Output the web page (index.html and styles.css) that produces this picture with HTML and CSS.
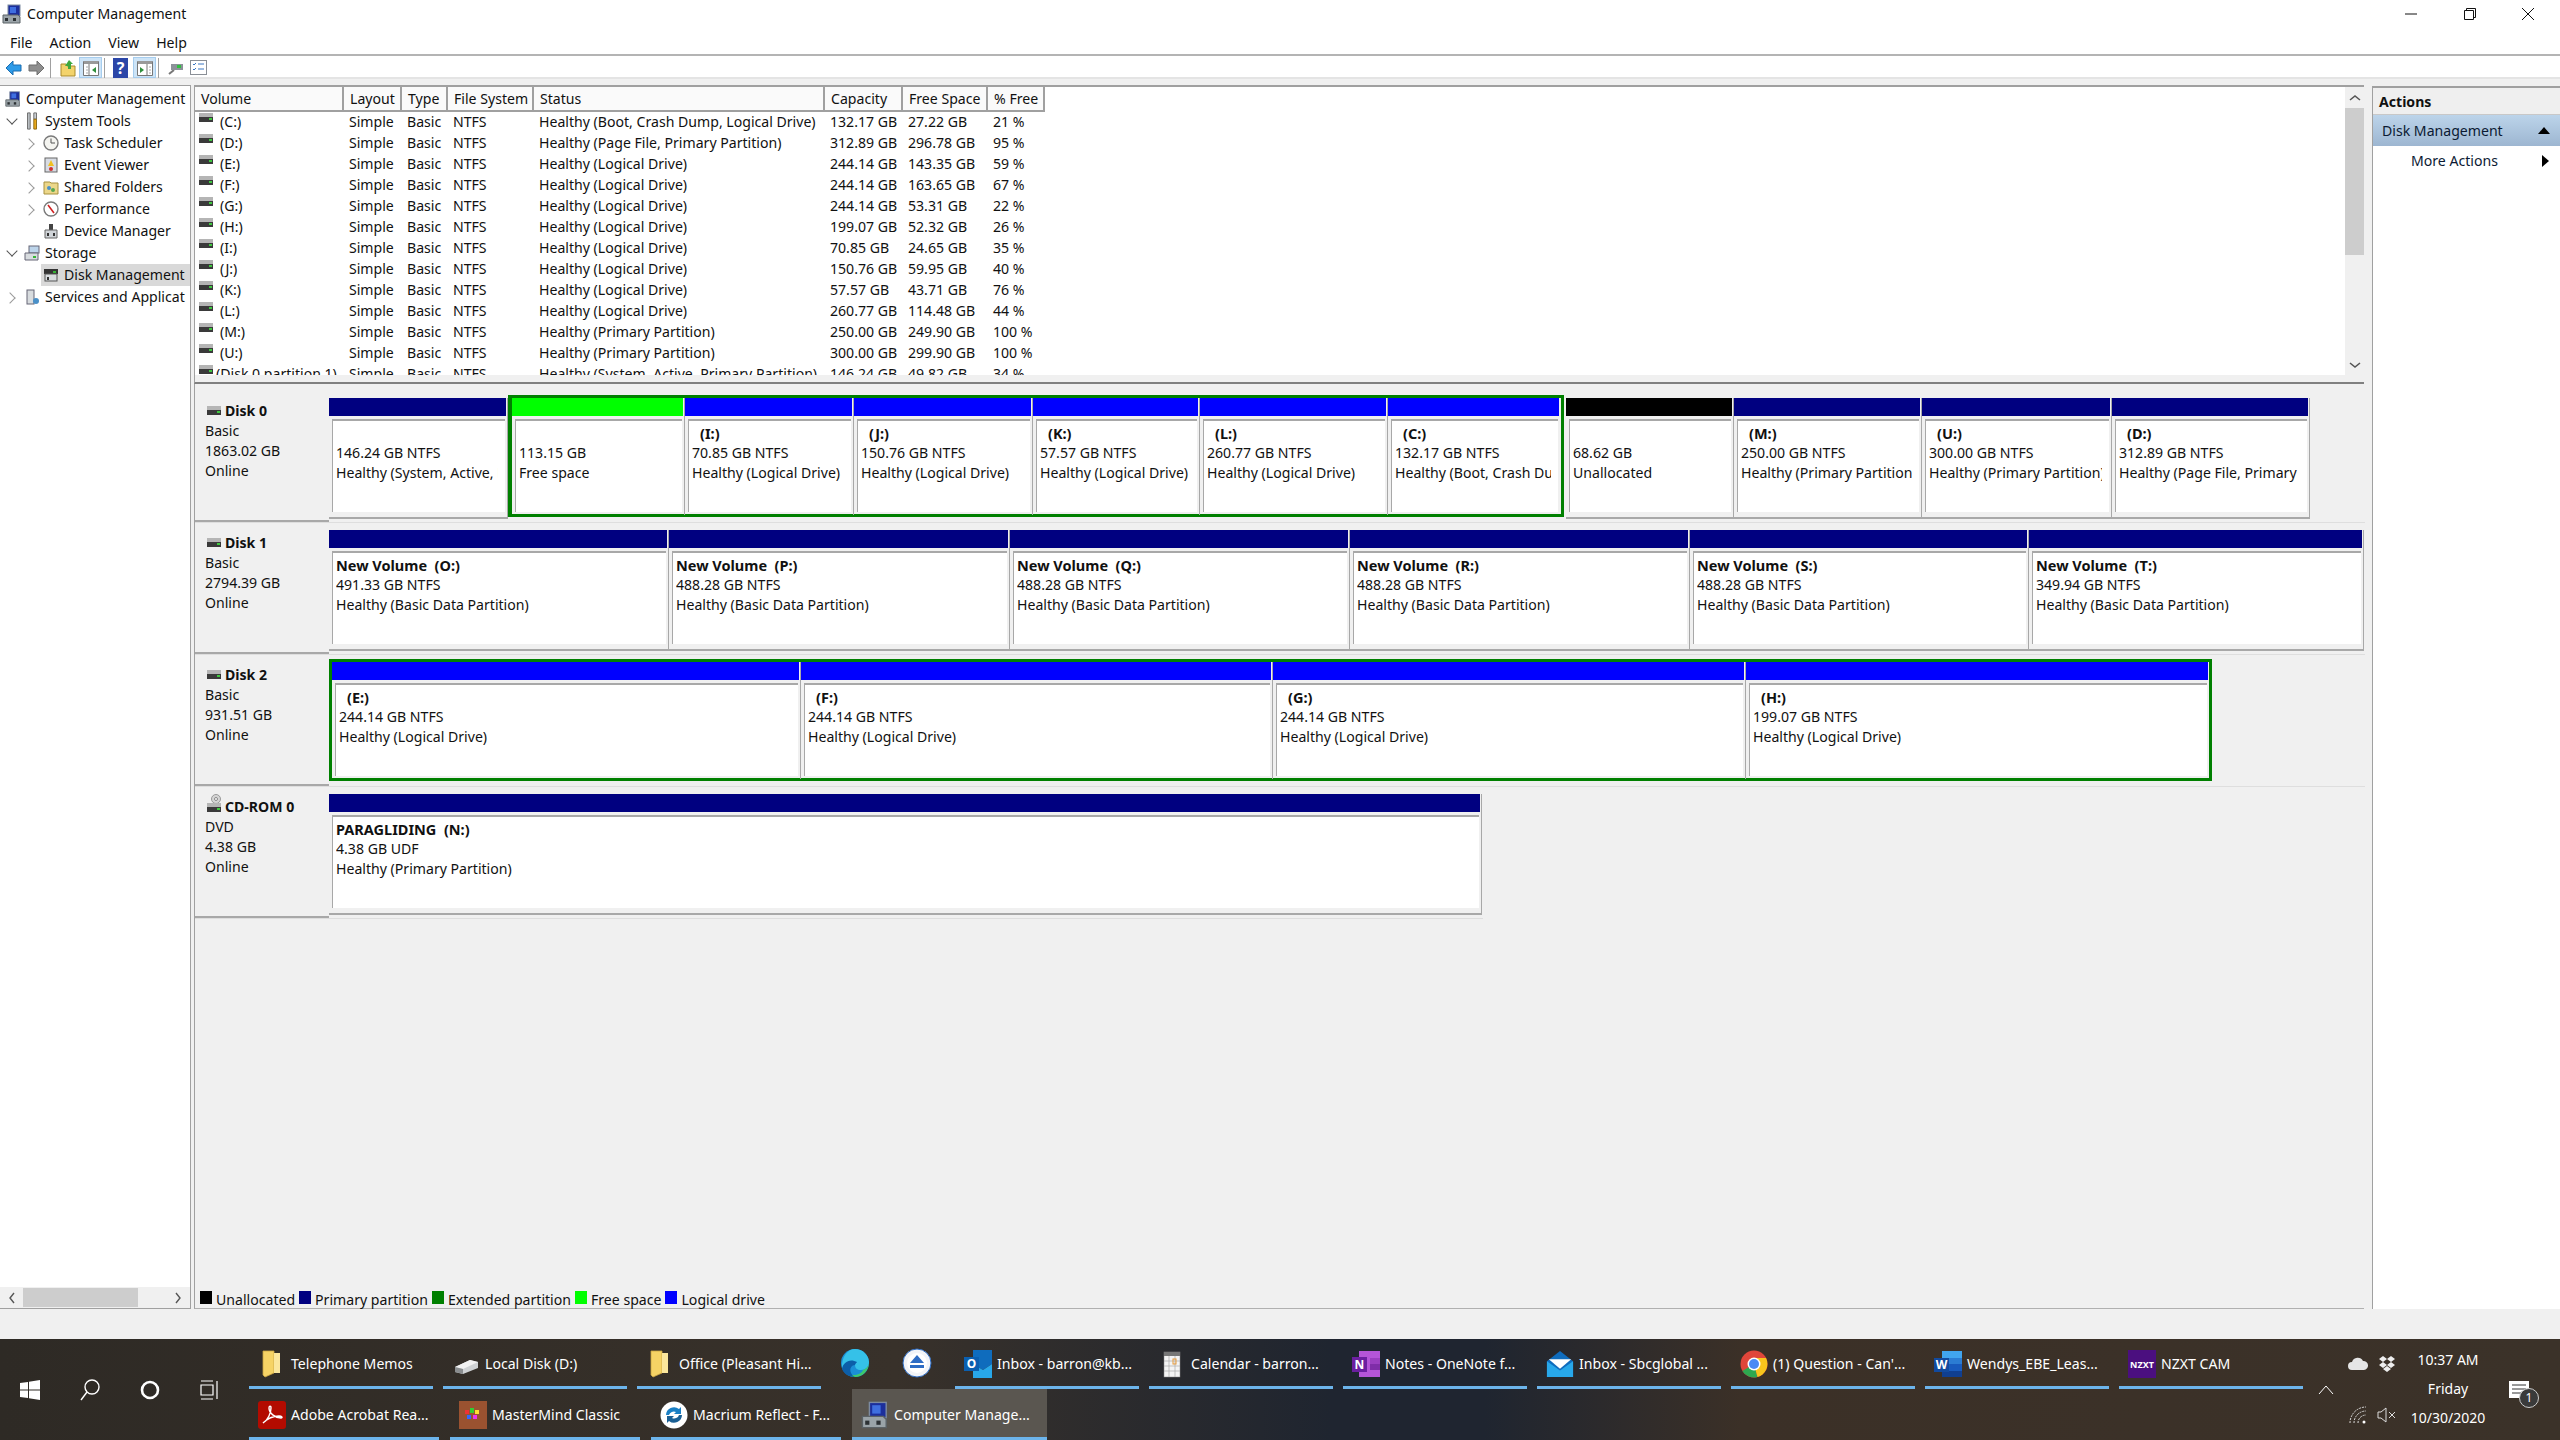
FILE: index.html
```html
<!DOCTYPE html>
<html lang="en">
<head>
<meta charset="utf-8">
<title>Computer Management</title>
<link rel="stylesheet" href="styles.css">
</head>
<body>
<svg class="defs" width="0" height="0">
  <symbol id="drive" viewBox="0 0 14 10"><rect x="0" y="0" width="14" height="4" fill="#b5b5b5"/><rect x="0" y="4" width="14" height="5" fill="#3a3a3a"/><rect x="10" y="5" width="3" height="2" fill="#3fc83f"/></symbol>
  <symbol id="comp" viewBox="0 0 20 20"><rect x="6" y="1" width="12" height="11" fill="#1c2f9c" stroke="#7c8aa0"/><rect x="8" y="3" width="6" height="6" fill="#3f6fe0"/><path d="M1 11h15l2 2v6H1z" fill="#9aa3a8" stroke="#5b6266"/><rect x="3" y="14" width="3" height="3" fill="#2c3134"/><rect x="11" y="14" width="3" height="3" fill="#2c3134"/></symbol>
  <symbol id="folder" viewBox="0 0 28 28"><path d="M5 1h11v22l-9 4-2-2z" fill="#f6d365" stroke="#caa443" stroke-width=".8"/><path d="M16 3h6v20h-6z" fill="#fbe69c"/></symbol>
  <symbol id="mail" viewBox="0 0 30 30"><path d="M15 1 1 12v17h28V12z" fill="#0f6cbd"/><path d="M1 12l14 10 14-10v17H1z" fill="#28a8ea"/><path d="M3 10h24L15 20z" fill="#fff"/></symbol>
</svg>

<div class="window">
  <header class="titlebar">
    <svg class="title-icon"><use href="#comp"/></svg>
    <span class="title-text">Computer Management</span>
    <div class="winctl">
      <svg width="14" height="14" viewBox="0 0 14 14"><path d="M1 7h12" stroke="#111" fill="none"/></svg>
      <svg width="14" height="14" viewBox="0 0 14 14"><path d="M1.500 3.500h9v9h-9zM3.500 3.500v-2h9v9h-2" stroke="#111" fill="none"/></svg>
      <svg width="14" height="14" viewBox="0 0 14 14"><path d="M1 1l12 12M13 1L1 13" stroke="#111" fill="none"/></svg>
    </div>
  </header>
  <nav class="menubar"><span>File</span><span>Action</span><span>View</span><span>Help</span></nav>
  <div class="toolbar">
    <div class="tgroup g1">
      <svg width="17" height="16" viewBox="0 0 17 16"><path d="M8 1v4h8v6H8v4L1 8z" fill="#2e9be8" stroke="#1b6db0"/></svg>
      <svg width="17" height="16" viewBox="0 0 17 16"><path d="M9 1v4H1v6h8v4l7-7z" fill="#8f8f8f" stroke="#6f6f6f"/></svg>
    </div>
    <i class="tsep"></i>
    <div class="tgroup g2">
      <svg width="16" height="18" viewBox="0 0 16 18"><path d="M1 5h5l1 2h8v10H1z" fill="#f3d36c" stroke="#a98a2c"/><path d="M9 1l4 4h-2v5H8V7H5z" fill="#3fa83f"/></svg>
      <span class="tbtn"><svg width="16" height="16" viewBox="0 0 16 16"><path d="M.5 1.500h15v14H.5z" fill="#fff" stroke="#777"/><path d="M1 1h14v3H1z" fill="#999"/><path d="M6 4v11" stroke="#777"/><path d="M3 7h2M3 10h2M3 13h2" stroke="#aaa"/><path d="M13 7v6l-4-3z" fill="#2e8f3c"/></svg></span>
    </div>
    <i class="tsep"></i>
    <div class="tgroup g3">
      <svg width="15" height="20" viewBox="0 0 15 20"><rect width="15" height="20" fill="#2b46a8"/><text x="7.500" y="16" class="help-q">?</text></svg>
      <span class="tbtn"><svg width="16" height="16" viewBox="0 0 16 16"><path d="M.5 1.500h15v14H.5z" fill="#fff" stroke="#777"/><path d="M1 1h14v3H1z" fill="#999"/><path d="M10 4v11" stroke="#777"/><path d="M12 7h2M12 10h2M12 13h2" stroke="#aaa"/><path d="M3 7v6l4-3z" fill="#2e8f3c"/></svg></span>
    </div>
    <i class="tsep"></i>
    <div class="tgroup g4">
      <svg width="16" height="16" viewBox="0 0 16 16"><path d="M1 14l5-4" stroke="#777" stroke-width="2"/><rect x="3" y="4" width="12" height="6" fill="#8c9299"/><rect x="9" y="5" width="4" height="3" fill="#2fbf3f"/></svg>
      <svg width="17" height="15" viewBox="0 0 17 15"><rect x=".5" y=".5" width="16" height="14" fill="#fff" stroke="#8a8f96"/><path d="M3 4l1 1 2-2M3 9l1 1 2-2M8 4h6M8 9h6" stroke="#3a77c2" fill="none"/></svg>
    </div>
  </div>

  <main class="main">
    <aside class="tree">
      <div class="tree-list">
        <div class="node l0"><i class="chev none"></i><svg class="ticon"><use href="#comp"/></svg><span>Computer Management</span></div>
        <div class="node l1"><i class="chev down"></i><svg class="ticon" viewBox="0 0 16 20"><path d="M3 1h3v18H3z" fill="#b9bec2" stroke="#666"/><path d="M10 1h3v7h-3z" fill="#c9ced2" stroke="#666"/><path d="M10 8h3v11h-3z" fill="#e8a81c" stroke="#8a6510"/></svg><span>System Tools</span></div>
        <div class="node l2"><i class="chev right"></i><svg class="ticon" viewBox="0 0 16 16"><circle cx="8" cy="8" r="7" fill="#f4f4f0" stroke="#7a7a7a" stroke-width="1.400"/><path d="M8 3.500V8h4" stroke="#555" fill="none"/></svg><span>Task Scheduler</span></div>
        <div class="node l2"><i class="chev right"></i><svg class="ticon" viewBox="0 0 16 16"><rect x="2" y="1" width="12" height="14" fill="#d8dce4" stroke="#666"/><path d="M8 3l3 6H5z" fill="#f0c020"/><circle cx="8" cy="12" r="2" fill="#d03030"/></svg><span>Event Viewer</span></div>
        <div class="node l2"><i class="chev right"></i><svg class="ticon" viewBox="0 0 16 16"><path d="M1 3h6l1 1h7v11H1z" fill="#ecd78a" stroke="#a8913f"/><circle cx="6" cy="9" r="2" fill="#4a90c8"/><circle cx="10" cy="11" r="2" fill="#5aa850"/></svg><span>Shared Folders</span></div>
        <div class="node l2"><i class="chev right"></i><svg class="ticon" viewBox="0 0 16 16"><circle cx="8" cy="8" r="7" fill="#fff" stroke="#7a7a7a" stroke-width="1.400"/><path d="M5 4l6 8" stroke="#d02020" stroke-width="1.500"/></svg><span>Performance</span></div>
        <div class="node l2"><i class="chev none"></i><svg class="ticon" viewBox="0 0 16 16"><rect x="6" y="1" width="4" height="6" fill="#444"/><path d="M2 7h12v8H2z" fill="#d0d4d8" stroke="#666"/><rect x="4" y="10" width="2" height="3" fill="#333"/><rect x="10" y="10" width="2" height="3" fill="#333"/></svg><span>Device Manager</span></div>
        <div class="node l1"><i class="chev down"></i><svg class="ticon" viewBox="0 0 16 16"><rect x="5" y="1" width="10" height="7" fill="#bcd4ea" stroke="#667"/><path d="M1 8h13v7H1z" fill="#d8dcdf" stroke="#667"/><rect x="9" y="11" width="3" height="2" fill="#35b535"/></svg><span>Storage</span></div>
        <div class="node l2 sel-node"><i class="chev none"></i><svg class="ticon" viewBox="0 0 16 16"><rect x="1" y="2" width="14" height="5" fill="#333"/><rect x="2" y="7" width="12" height="7" fill="#d8dcdf" stroke="#555"/><rect x="10" y="4" width="3" height="2" fill="#35b535"/><rect x="4" y="10" width="2" height="3" fill="#333"/></svg><span>Disk Management</span></div>
        <div class="node l1"><i class="chev right"></i><svg class="ticon" viewBox="0 0 16 16"><rect x="3" y="1" width="7" height="14" fill="#d8dcdf" stroke="#667"/><circle cx="12" cy="12" r="3" fill="#4a90c8"/></svg><span>Services and Applicat</span></div>
      </div>
      <div class="hscroll">
        <svg width="8" height="12" viewBox="0 0 8 12"><path d="M6 1L2 6l4 5" stroke="#555" stroke-width="1.400" fill="none"/></svg>
        <i class="hthumb"></i>
        <svg width="8" height="12" viewBox="0 0 8 12"><path d="M2 1l4 5-4 5" stroke="#555" stroke-width="1.400" fill="none"/></svg>
      </div>
    </aside>

    <section class="center">
      <div class="listpane">
        <div class="tablewrap">
          <table class="vols-table">
            <colgroup><col class="c1"><col class="c2"><col class="c3"><col class="c4"><col class="c5"><col class="c6"><col class="c7"><col class="c8"></colgroup>
            <thead><tr><th>Volume</th><th>Layout</th><th>Type</th><th>File System</th><th>Status</th><th>Capacity</th><th>Free Space</th><th>% Free</th></tr></thead>
            <tbody>
              <tr><td class="vn"><svg class="dicon"><use href="#drive"/></svg><span class="gap">(C:)</span></td><td>Simple</td><td>Basic</td><td>NTFS</td><td>Healthy (Boot, Crash Dump, Logical Drive)</td><td>132.17 GB</td><td>27.22 GB</td><td>21 %</td></tr>
              <tr><td class="vn"><svg class="dicon"><use href="#drive"/></svg><span class="gap">(D:)</span></td><td>Simple</td><td>Basic</td><td>NTFS</td><td>Healthy (Page File, Primary Partition)</td><td>312.89 GB</td><td>296.78 GB</td><td>95 %</td></tr>
              <tr><td class="vn"><svg class="dicon"><use href="#drive"/></svg><span class="gap">(E:)</span></td><td>Simple</td><td>Basic</td><td>NTFS</td><td>Healthy (Logical Drive)</td><td>244.14 GB</td><td>143.35 GB</td><td>59 %</td></tr>
              <tr><td class="vn"><svg class="dicon"><use href="#drive"/></svg><span class="gap">(F:)</span></td><td>Simple</td><td>Basic</td><td>NTFS</td><td>Healthy (Logical Drive)</td><td>244.14 GB</td><td>163.65 GB</td><td>67 %</td></tr>
              <tr><td class="vn"><svg class="dicon"><use href="#drive"/></svg><span class="gap">(G:)</span></td><td>Simple</td><td>Basic</td><td>NTFS</td><td>Healthy (Logical Drive)</td><td>244.14 GB</td><td>53.31 GB</td><td>22 %</td></tr>
              <tr><td class="vn"><svg class="dicon"><use href="#drive"/></svg><span class="gap">(H:)</span></td><td>Simple</td><td>Basic</td><td>NTFS</td><td>Healthy (Logical Drive)</td><td>199.07 GB</td><td>52.32 GB</td><td>26 %</td></tr>
              <tr><td class="vn"><svg class="dicon"><use href="#drive"/></svg><span class="gap">(I:)</span></td><td>Simple</td><td>Basic</td><td>NTFS</td><td>Healthy (Logical Drive)</td><td>70.85 GB</td><td>24.65 GB</td><td>35 %</td></tr>
              <tr><td class="vn"><svg class="dicon"><use href="#drive"/></svg><span class="gap">(J:)</span></td><td>Simple</td><td>Basic</td><td>NTFS</td><td>Healthy (Logical Drive)</td><td>150.76 GB</td><td>59.95 GB</td><td>40 %</td></tr>
              <tr><td class="vn"><svg class="dicon"><use href="#drive"/></svg><span class="gap">(K:)</span></td><td>Simple</td><td>Basic</td><td>NTFS</td><td>Healthy (Logical Drive)</td><td>57.57 GB</td><td>43.71 GB</td><td>76 %</td></tr>
              <tr><td class="vn"><svg class="dicon"><use href="#drive"/></svg><span class="gap">(L:)</span></td><td>Simple</td><td>Basic</td><td>NTFS</td><td>Healthy (Logical Drive)</td><td>260.77 GB</td><td>114.48 GB</td><td>44 %</td></tr>
              <tr><td class="vn"><svg class="dicon"><use href="#drive"/></svg><span class="gap">(M:)</span></td><td>Simple</td><td>Basic</td><td>NTFS</td><td>Healthy (Primary Partition)</td><td>250.00 GB</td><td>249.90 GB</td><td>100 %</td></tr>
              <tr><td class="vn"><svg class="dicon"><use href="#drive"/></svg><span class="gap">(U:)</span></td><td>Simple</td><td>Basic</td><td>NTFS</td><td>Healthy (Primary Partition)</td><td>300.00 GB</td><td>299.90 GB</td><td>100 %</td></tr>
              <tr><td class="vn"><svg class="dicon"><use href="#drive"/></svg><span>(Disk 0 partition 1)</span></td><td>Simple</td><td>Basic</td><td>NTFS</td><td>Healthy (System, Active, Primary Partition)</td><td>146.24 GB</td><td>49.82 GB</td><td>34 %</td></tr>
            </tbody>
          </table>
        </div>
        <div class="vscroll">
          <svg width="12" height="8" viewBox="0 0 12 8"><path d="M1 6l5-4 5 4" stroke="#555" stroke-width="1.600" fill="none"/></svg>
          <i class="vthumb"></i>
          <svg width="12" height="8" viewBox="0 0 12 8"><path d="M1 2l5 4 5-4" stroke="#555" stroke-width="1.600" fill="none"/></svg>
        </div>
      </div>

      <div class="disks">
        <div class="disk">
          <div class="dlabel"><div class="dname"><svg class="dicon"><use href="#drive"/></svg><b>Disk 0</b></div><div>Basic</div><div>1863.02 GB</div><div>Online</div></div>
          <div class="seg" style="width:179px"><div class="bar primary"></div><div class="box"><div class="l name">&nbsp;</div><div class="l">146.24 GB NTFS</div><div class="l">Healthy (System, Active, Primary Partition)</div></div></div>
          <div class="selwrap" style="width:1056px">
            <div class="seg" style="width:173px"><div class="bar free"></div><div class="box"><div class="l name">&nbsp;</div><div class="l">113.15 GB</div><div class="l">Free space</div></div></div>
            <div class="seg" style="width:169px"><div class="bar logical"></div><div class="box"><div class="l name ind">(I:)</div><div class="l">70.85 GB NTFS</div><div class="l">Healthy (Logical Drive)</div></div></div>
            <div class="seg" style="width:179px"><div class="bar logical"></div><div class="box"><div class="l name ind">(J:)</div><div class="l">150.76 GB NTFS</div><div class="l">Healthy (Logical Drive)</div></div></div>
            <div class="seg" style="width:167px"><div class="bar logical"></div><div class="box"><div class="l name ind">(K:)</div><div class="l">57.57 GB NTFS</div><div class="l">Healthy (Logical Drive)</div></div></div>
            <div class="seg" style="width:188px"><div class="bar logical"></div><div class="box"><div class="l name ind">(L:)</div><div class="l">260.77 GB NTFS</div><div class="l">Healthy (Logical Drive)</div></div></div>
            <div class="seg" style="width:172px"><div class="bar logical"></div><div class="box"><div class="l name ind">(C:)</div><div class="l">132.17 GB NTFS</div><div class="l">Healthy (Boot, Crash Dump, Logical Drive)</div></div></div>
          </div>
          <div class="seg" style="width:168px"><div class="bar unalloc"></div><div class="box"><div class="l name">&nbsp;</div><div class="l">68.62 GB</div><div class="l">Unallocated</div></div></div>
          <div class="seg" style="width:188px"><div class="bar primary"></div><div class="box"><div class="l name ind">(M:)</div><div class="l">250.00 GB NTFS</div><div class="l">Healthy (Primary Partition)</div></div></div>
          <div class="seg" style="width:190px"><div class="bar primary"></div><div class="box"><div class="l name ind">(U:)</div><div class="l">300.00 GB NTFS</div><div class="l">Healthy (Primary Partition)</div></div></div>
          <div class="seg" style="width:198px"><div class="bar primary"></div><div class="box"><div class="l name ind">(D:)</div><div class="l">312.89 GB NTFS</div><div class="l">Healthy (Page File, Primary Partition)</div></div></div>
        </div>

        <div class="disk">
          <div class="dlabel"><div class="dname"><svg class="dicon"><use href="#drive"/></svg><b>Disk 1</b></div><div>Basic</div><div>2794.39 GB</div><div>Online</div></div>
          <div class="seg" style="width:340px"><div class="bar primary"></div><div class="box"><div class="l name">New Volume&nbsp; (O:)</div><div class="l">491.33 GB NTFS</div><div class="l">Healthy (Basic Data Partition)</div></div></div>
          <div class="seg" style="width:341px"><div class="bar primary"></div><div class="box"><div class="l name">New Volume&nbsp; (P:)</div><div class="l">488.28 GB NTFS</div><div class="l">Healthy (Basic Data Partition)</div></div></div>
          <div class="seg" style="width:340px"><div class="bar primary"></div><div class="box"><div class="l name">New Volume&nbsp; (Q:)</div><div class="l">488.28 GB NTFS</div><div class="l">Healthy (Basic Data Partition)</div></div></div>
          <div class="seg" style="width:340px"><div class="bar primary"></div><div class="box"><div class="l name">New Volume&nbsp; (R:)</div><div class="l">488.28 GB NTFS</div><div class="l">Healthy (Basic Data Partition)</div></div></div>
          <div class="seg" style="width:339px"><div class="bar primary"></div><div class="box"><div class="l name">New Volume&nbsp; (S:)</div><div class="l">488.28 GB NTFS</div><div class="l">Healthy (Basic Data Partition)</div></div></div>
          <div class="seg" style="width:335px"><div class="bar primary"></div><div class="box"><div class="l name">New Volume&nbsp; (T:)</div><div class="l">349.94 GB NTFS</div><div class="l">Healthy (Basic Data Partition)</div></div></div>
        </div>

        <div class="disk">
          <div class="dlabel"><div class="dname"><svg class="dicon"><use href="#drive"/></svg><b>Disk 2</b></div><div>Basic</div><div>931.51 GB</div><div>Online</div></div>
          <div class="selwrap last" style="width:1883px">
            <div class="seg" style="width:469px"><div class="bar logical"></div><div class="box"><div class="l name ind">(E:)</div><div class="l">244.14 GB NTFS</div><div class="l">Healthy (Logical Drive)</div></div></div>
            <div class="seg" style="width:472px"><div class="bar logical"></div><div class="box"><div class="l name ind">(F:)</div><div class="l">244.14 GB NTFS</div><div class="l">Healthy (Logical Drive)</div></div></div>
            <div class="seg" style="width:473px"><div class="bar logical"></div><div class="box"><div class="l name ind">(G:)</div><div class="l">244.14 GB NTFS</div><div class="l">Healthy (Logical Drive)</div></div></div>
            <div class="seg" style="width:463px"><div class="bar logical"></div><div class="box"><div class="l name ind">(H:)</div><div class="l">199.07 GB NTFS</div><div class="l">Healthy (Logical Drive)</div></div></div>
          </div>
        </div>

        <div class="disk">
          <div class="dlabel"><div class="dname"><svg class="dicon cd" viewBox="0 0 14 20"><circle cx="9" cy="5" r="4.500" fill="#d5d5d5" stroke="#999"/><circle cx="9" cy="5" r="1.500" fill="#fff" stroke="#888"/><rect x="0" y="9" width="14" height="4" fill="#b5b5b5"/><rect x="0" y="13" width="14" height="5" fill="#3a3a3a"/><rect x="10" y="14" width="3" height="2" fill="#3fc83f"/></svg><b>CD-ROM 0</b></div><div>DVD</div><div>4.38 GB</div><div>Online</div></div>
          <div class="seg" style="width:1153px"><div class="bar primary"></div><div class="box"><div class="l name">PARAGLIDING&nbsp; (N:)</div><div class="l">4.38 GB UDF</div><div class="l">Healthy (Primary Partition)</div></div></div>
        </div>
      </div>

      <div class="legend">
        <i class="sw unalloc"></i><span>Unallocated</span>
        <i class="sw primary"></i><span>Primary partition</span>
        <i class="sw extended"></i><span>Extended partition</span>
        <i class="sw free"></i><span>Free space</span>
        <i class="sw logical"></i><span>Logical drive</span>
      </div>
    </section>

    <aside class="actions">
      <div class="act-head">Actions</div>
      <div class="act-group"><span>Disk Management</span><svg width="12" height="7" viewBox="0 0 12 7"><path d="M6 0l6 7H0z" fill="#000"/></svg></div>
      <div class="act-item"><span>More Actions</span><svg width="7" height="12" viewBox="0 0 7 12"><path d="M0 0l7 6-7 6z" fill="#000"/></svg></div>
    </aside>
  </main>
</div>

<footer class="taskbar">
  <div class="tb-left">
    <span class="tb-sys"><svg width="20" height="20" viewBox="0 0 20 20"><path d="M0 3l8-1v7.500H0zM9 1.800 20 0v9.500H9zM0 10.500h8V18l-8-1zM9 10.500h11V20L9 18.200z" fill="#fff"/></svg></span>
    <span class="tb-sys"><svg width="20" height="22" viewBox="0 0 20 22"><circle cx="12" cy="8" r="7" fill="none" stroke="#fff" stroke-width="1.400"/><path d="M7 13L1 21" stroke="#fff" stroke-width="1.400"/></svg></span>
    <span class="tb-sys"><svg width="20" height="20" viewBox="0 0 20 20"><circle cx="10" cy="10" r="8" fill="none" stroke="#fff" stroke-width="2.600"/></svg></span>
    <span class="tb-sys"><svg width="20" height="20" viewBox="0 0 20 20"><path d="M1 1h12M1 5h12v10H1zM1 19h12M17 1v18" stroke="#fff" stroke-width="1.200" fill="none"/></svg></span>
  </div>
  <div class="tb-rows">
    <div class="tb-row">
      <div class="task"><svg class="ticn"><use href="#folder"/></svg><span>Telephone Memos</span></div>
      <div class="task"><svg class="ticn" viewBox="0 0 28 28"><path d="M3 17l15-7 8 2v6l-15 6-8-2z" fill="#cfd2d4"/><path d="M3 17l8 2 15-7-8-2z" fill="#f2f2f2"/><path d="M3 17l8 2v5l-8-2z" fill="#8a8d8f"/></svg><span>Local Disk (D:)</span></div>
      <div class="task"><svg class="ticn"><use href="#folder"/></svg><span>Office (Pleasant Hi...</span></div>
      <div class="pins">
        <svg width="30" height="30" viewBox="0 0 30 30"><circle cx="15" cy="15" r="14" fill="#1b8fd6"/><path d="M15 1a14 14 0 0 1 14 13c0 5-4 8-8 8s-6-2-6-5c0-1 1-2 2-3-7-2-13 2-15 7C1 8 8 1 15 1z" fill="#35c1e8"/><path d="M29 14c0 9-7 15-14 15-3 0-6-1-8-3 7 2 14 1 16-4 3-1 6-4 6-8z" fill="#3ec96b"/><path d="M2 21c1-7 8-11 15-7-1 1-2 2-2 3-3 0-6 3-4 8 1 2 2 3 4 4C9 29 4 26 2 21z" fill="#0c5ea8"/></svg>
        <svg width="30" height="30" viewBox="0 0 30 30"><circle cx="15" cy="15" r="14" fill="#f2f4f8" stroke="#2d6cc4" stroke-width="1"/><circle cx="15" cy="15" r="10" fill="#fff"/><path d="M15 7l7 8H8z" fill="#2d6cc4"/><rect x="8" y="17" width="14" height="3" fill="#2d6cc4"/></svg>
      </div>
      <div class="task"><svg class="ticn" viewBox="0 0 28 28"><path d="M9 0h19v14l-9 6-10-6z" fill="#0f6cbd"/><path d="M9 14l10 6 9-6v14H9z" fill="#28a8ea"/><rect x="0" y="7" width="15" height="14" fill="#0a5fb0"/><text x="7.500" y="18" class="ic-l">O</text></svg><span>Inbox - barron@kb...</span></div>
      <div class="task"><svg class="ticn" viewBox="0 0 28 28"><rect x="6" y="2" width="16" height="25" fill="#f4f4f4" stroke="#888" stroke-width=".5"/><rect x="6" y="2" width="16" height="4" fill="#777"/><path d="M6 11h16M6 16h16M6 21h16M11 6v21M17 6v21" stroke="#aaa" stroke-width=".7"/><rect x="15" y="9" width="3" height="5" fill="none" stroke="#e69a3a"/></svg><span>Calendar - barron...</span></div>
      <div class="task"><svg class="ticn" viewBox="0 0 28 28"><rect x="7" y="1" width="21" height="26" fill="#b455d8"/><rect x="18" y="8" width="10" height="6" fill="#9a3fc0"/><rect x="18" y="14" width="10" height="6" fill="#7f2da8"/><rect x="0" y="7" width="15" height="15" fill="#6b1fa0"/><text x="7.500" y="19" class="ic-l">N</text></svg><span>Notes - OneNote f...</span></div>
      <div class="task"><svg class="ticn"><use href="#mail"/></svg><span>Inbox - Sbcglobal ...</span></div>
      <div class="task"><svg class="ticn" viewBox="0 0 28 28"><circle cx="14" cy="14" r="13.500" fill="#e0463a"/><path d="M14 14L2.300 21a13.500 13.500 0 0 0 15.200 6z" fill="#2ea84f"/><path d="M14 14l3.500 13A13.500 13.500 0 0 0 26 8H14z" fill="#f8c51c"/><circle cx="14" cy="14" r="6.500" fill="#fff"/><circle cx="14" cy="14" r="5" fill="#4a8af4"/></svg><span>(1) Question - Can'...</span></div>
      <div class="task"><svg class="ticn" viewBox="0 0 28 28"><rect x="8" y="1" width="20" height="26" fill="#2b7cd3"/><rect x="8" y="1" width="20" height="7" fill="#41a5ee"/><rect x="8" y="14" width="20" height="7" fill="#185abd"/><rect x="8" y="21" width="20" height="6" fill="#103f91"/><rect x="0" y="8" width="15" height="14" fill="#124a9e"/><text x="7.500" y="19" class="ic-l">W</text></svg><span>Wendys_EBE_Leas...</span></div>
      <div class="task"><svg class="ticn" viewBox="0 0 28 28"><rect x="0" y="0" width="28" height="28" fill="#4b0f7f"/><text x="14" y="18" class="ic-s">NZXT</text></svg><span>NZXT CAM</span></div>
    </div>
    <div class="tb-row r2">
      <div class="task w"><svg class="ticn" viewBox="0 0 28 28"><rect width="28" height="28" rx="3" fill="#b30b00"/><path d="M5 22c5-3 8-10 8-15 0-3-2-2-2 0 0 5 6 10 12 10 2 0 1-2-2-2-4 0-11 2-16 7z" fill="none" stroke="#fff" stroke-width="1.400"/></svg><span>Adobe Acrobat Rea...</span></div>
      <div class="task w"><svg class="ticn" viewBox="0 0 28 28"><rect width="28" height="34" y="-3" fill="#9a5230"/><rect x="6" y="9" width="4" height="4" fill="#e33"/><rect x="11" y="7" width="4" height="5" fill="#3c3"/><rect x="16" y="9" width="4" height="4" fill="#fd3"/><rect x="8" y="14" width="4" height="4" fill="#36f"/><rect x="14" y="14" width="4" height="4" fill="#e3e"/></svg><span>MasterMind Classic</span></div>
      <div class="task w"><svg class="ticn" viewBox="0 0 28 28"><circle cx="14" cy="14" r="13.500" fill="#fff"/><path d="M6 14a8 8 0 0 1 13-6l2-2v7h-7l2-2a5 5 0 0 0-7 3z" fill="#1a7fc4"/><path d="M22 14a8 8 0 0 1-13 6l-2 2v-7h7l-2 2a5 5 0 0 0 7-3z" fill="#1a5f94"/></svg><span>Macrium Reflect - F...</span></div>
      <div class="task w active"><svg class="ticn"><use href="#comp"/></svg><span>Computer Manage...</span></div>
    </div>
  </div>
  <div class="tray">
    <span class="tray-chev"><svg width="16" height="10" viewBox="0 0 16 10"><path d="M1 9l7-8 7 8" stroke="#fff" fill="none"/></svg></span>
    <div class="tray-icons">
      <svg width="20" height="16" viewBox="0 0 20 16"><path d="M4 15a4 4 0 0 1 0-8 6 6 0 0 1 11-1 4.500 4.500 0 0 1 1 9z" fill="#e6e6e6"/></svg>
      <svg width="18" height="17" viewBox="0 0 18 17"><path d="M5 1l4 3-4 3-4-3zM13 1l4 3-4 3-4-3zM5 7l4 3-4 3-4-3zM13 7l4 3-4 3-4-3zM9 11l4 3-4 3-4-3z" fill="#eee"/></svg>
      <svg width="18" height="18" viewBox="0 0 18 18"><path d="M1 17A16 16 0 0 1 17 1M5 17A12 12 0 0 1 17 5M9 17a8 8 0 0 1 8-8" stroke="#ddd" fill="none" stroke-dasharray="2 1"/><circle cx="15" cy="16" r="1.500" fill="#fff"/></svg>
      <svg width="20" height="18" viewBox="0 0 20 18"><path d="M1 6h3l5-4v14l-5-4H1z" stroke="#ddd" fill="none"/><path d="M12 6l6 6M18 6l-6 6" stroke="#ddd"/></svg>
    </div>
    <div class="clock"><div>10:37 AM</div><div>Friday</div><div>10/30/2020</div></div>
    <div class="notif"><svg width="20" height="17" viewBox="0 0 20 17"><path d="M0 0h20v17H0z" fill="#fff"/><path d="M3 4h14M3 8h14M3 12h9" stroke="#333"/></svg><span class="badge">1</span></div>
  </div>
</footer>
</body>
</html>
```

FILE: styles.css
```css
* { box-sizing: border-box; }
html, body { margin: 0; padding: 0; }
body {
  width: 2560px; height: 1440px; overflow: hidden;
  background: #f0f0f0; color: #111;
  font-family: "Noto Sans", "Open Sans", sans-serif; font-size: 14.1px; line-height: 20px;
  display: flex; flex-direction: column;
}
.defs { position: absolute; }
.window { height: 1339px; display: flex; flex-direction: column; flex: none; }

.titlebar { height: 28px; background: #fff; display: flex; align-items: center; padding-left: 2px; flex: none; }
.title-icon { width: 20px; height: 20px; }
.title-text { margin-left: 5px; }
.winctl { margin-left: auto; display: flex; gap: 44.500px; padding-right: 25px; }

.menubar { height: 28px; background: #fff; border-bottom: 2px solid #b4b4b4; display: flex; padding: 4px 0 0 10px; gap: 17px; align-items: center; flex: none; }

.toolbar { height: 23px; background: #fff; border-bottom: 2px solid #e4e4e4; display: flex; align-items: center; padding: 2px 0 0 5px; flex: none; }
.tgroup { display: flex; align-items: center; }
.g1 { gap: 6px; margin-right: 3px; }
.g2 { gap: 3px; margin-left: 1px; }
.g3 { gap: 5px; }
.g4 { gap: 6px; margin-left: 1px; }
.tsep { width: 1px; height: 20px; background: #a0a0a0; margin: 0 8px 0 2px; }
.tbtn { width: 23px; height: 21px; background: #cde4f7; border: 1px solid #a6cdee; display: flex; align-items: center; justify-content: center; }
.help-q { fill: #fff; font-size: 16px; font-weight: 700; text-anchor: middle; }

.main { flex: 1; min-height: 0; display: flex; padding-top: 6px; padding-bottom: 30px; }
.tree { width: 191px; flex: none; background: #fff; border-top: 1px solid #a0a0a0; border-right: 1px solid #a0a0a0; border-bottom: 1px solid #a0a0a0; display: flex; flex-direction: column; }
.tree-list { flex: 1; padding-top: 2px; overflow: hidden; }
.node { height: 22px; display: flex; align-items: center; white-space: nowrap; overflow: hidden; }
.node .ticon { width: 16px; height: 18px; flex: none; margin-right: 5px; }
.l0 { padding-left: 0; }
.l0 .chev { width: 5px; }
.l1 { padding-left: 6px; }
.l2 { padding-left: 25px; }
.chev { width: 18px; height: 12px; flex: none; position: relative; display: block; }
.chev.down::before { content: ""; position: absolute; left: 2px; top: 0; width: 7px; height: 7px; border-right: 1.500px solid #555; border-bottom: 1.500px solid #555; transform: rotate(45deg); }
.chev.right::before { content: ""; position: absolute; left: 0; top: 3px; width: 7px; height: 7px; border-right: 1.500px solid #9a9a9a; border-top: 1.500px solid #9a9a9a; transform: rotate(45deg); }
.sel-node { background: linear-gradient(to right, #fff 41px, #d9d9d9 41px); }
.hscroll { height: 21px; background: #f0f0f0; display: flex; align-items: center; padding: 0 8px; gap: 7px; flex: none; justify-content: space-between; }
.hthumb { width: 115px; height: 19px; background: #cdcdcd; margin-right: auto; }

.center { width: 2170px; margin-left: 3px; flex: none; display: flex; flex-direction: column; }
.listpane { height: 299px; flex: none; border-top: 2px solid #a0a0a0; border-left: 1px solid #a0a0a0; border-bottom: 2px solid #808080; display: flex; background: #fff; box-shadow: inset 0 -7px 0 #f0f0f0; }
.tablewrap { flex: 1; overflow: hidden; height: 288px; }
.vols-table { border-collapse: collapse; table-layout: fixed; width: 849px; }
.c1 { width: 148px; } .c2 { width: 58px; } .c3 { width: 46px; } .c4 { width: 86px; }
.c5 { width: 291px; } .c6 { width: 78px; } .c7 { width: 85px; } .c8 { width: 57px; }
.vols-table th { height: 24px; padding: 0 0 0 6px; font-weight: 400; text-align: left; border-right: 2px solid #a0a0a0; border-bottom: 2px solid #a0a0a0; white-space: nowrap; overflow: hidden; background: #fafafa; }
.vols-table td { height: 21px; padding: 0 0 0 6px; white-space: nowrap; overflow: hidden; }
.vols-table td.vn { padding-left: 4px; }
.dicon { width: 14px; height: 10px; flex: none; margin-right: 3px; vertical-align: 4px; }
.gap { margin-left: 4px; }
.vscroll { width: 19px; height: 289px; flex: none; background: #f0f0f0; display: flex; flex-direction: column; align-items: center; justify-content: space-between; padding: 7px 0; }
.vthumb { width: 19px; height: 147px; background: #cdcdcd; margin-top: 6px; margin-bottom: auto; }

.disks { flex: 1; min-height: 0; padding-top: 7px; border-left: 1px solid #a0a0a0; }
.disk { height: 132px; display: flex; align-items: flex-start; border-bottom: 1px solid #dedede; width: 2170px; padding-top: 7px; }
.disk:last-child { width: 1288px; }
.dlabel { width: 134px; flex: none; margin-top: -7px; padding: 10px 0 0 10px; height: 131px; background: #f0f0f0; border-bottom: 2px solid #a8a8a8; }
.dname { display: flex; align-items: center; }
.dname .dicon { margin: 0 4px 0 2px; }
.dicon.cd { height: 20px; margin-top: -6px; }
.seg { flex: none; height: 121px; border-bottom: 2px solid #a8a8a8; border-right: 1px solid #a8a8a8; }
.selwrap { flex: none; display: flex; margin: -3px 2px 0 0; height: 122px; border: 3px solid #008000; border-left-width: 4px; padding-bottom: 2px; }
.selwrap.last { border-left-width: 3px; }
.selwrap .seg { height: 117px; border-bottom: 0; }
.selwrap .seg:last-child { border-right: 0; }
.bar { height: 18px; margin-right: 1px; }
.primary { background: #000080; }
.logical { background: #0000ff; }
.free { background: #00ff00; }
.extended { background: #008000; }
.unalloc { background: #000; }
.box { height: 93px; margin: 3px 2px 0 3px; background: #fff; border-top: 2px solid #a8a8a8; border-left: 1px solid #a8a8a8; padding: 2px 7px 0 3px; overflow: hidden; }
.l { height: 20px; white-space: nowrap; overflow: hidden; }
.name { font-weight: 700; font-size: 14.500px; }
.ind { padding-left: 8px; }

.legend { height: 20px; flex: none; margin-top: auto; border-bottom: 1px solid #b0b0b0; border-left: 1px solid #a0a0a0; display: flex; align-items: center; padding: 2px 0 0 5px; background: #f0f0f0; }
.sw { width: 12px; height: 13px; margin-right: 4px; flex: none; margin-top: -4px; }
.legend span { margin-right: 4px; }

.actions { width: 188px; flex: none; margin: 1px 0 0 8px; background: #fff; border-top: 2px solid #a0a0a0; border-left: 1px solid #a0a0a0; }
.act-head { height: 27px; background: #efefef; font-weight: 700; padding: 4px 0 0 6px; border-bottom: 1px solid #c8c8c8; }
.act-group { height: 31px; background: linear-gradient(#bcd4ea, #9db6d1); display: flex; align-items: center; justify-content: space-between; padding: 0 10px 0 9px; color: #0b1a33; }
.act-item { height: 29px; display: flex; align-items: center; justify-content: space-between; padding: 1px 11px 0 38px; color: #0b1a33; }

.taskbar { height: 101px; flex: none; display: flex; background: linear-gradient(90deg, #2e2a25 0, #38312a 35%, #1f2530 52%, #1f2530 58%, #3b3027 68%, #3b3229 100%); color: #fff; }
.tb-left { width: 249px; flex: none; display: flex; align-items: center; }
.tb-sys { width: 60px; display: flex; justify-content: center; }
.tb-rows { width: 2054px; flex: none; display: flex; flex-direction: column; }
.tb-row { height: 50px; display: flex; gap: 10px; }
.r2 { height: 51px; gap: 11px; }
.task { width: 184px; flex: none; display: flex; align-items: center; padding: 2px 0 0 9px; border-bottom: 3px solid #6cb4eb; white-space: nowrap; overflow: hidden; }
.r2 .task { padding-top: 4px; }
.task.w { width: 190px; }
.task.active { background: #5a5650; width: 195px; }
.ticn { width: 28px; height: 28px; flex: none; margin-right: 5px; }
.pins { width: 114px; flex: none; display: flex; align-items: center; gap: 32px; padding-left: 9px; padding-bottom: 3px; }
.ic-l { fill: #fff; font-size: 12px; font-weight: 700; text-anchor: middle; }
.ic-s { fill: #fff; font-size: 9px; font-weight: 700; text-anchor: middle; }
.tray { flex: 1; display: flex; }
.tray-chev { width: 40px; padding-left: 6px; display: flex; align-items: center; justify-content: center; }
.tray-icons { width: 58px; display: grid; grid-template-columns: 29px 29px; grid-template-rows: 48px 56px; align-items: center; justify-items: center; }
.clock { width: 94px; text-align: center; font-size: 14px; display: flex; flex-direction: column; gap: 9px; padding-top: 11px; }
.notif { width: 65px; position: relative; display: flex; align-items: center; padding-left: 14px; }
.badge { position: absolute; left: 24px; top: 49px; width: 20px; height: 20px; border-radius: 50%; background: #3a3a3a; border: 1px solid #ccc; font-size: 12px; line-height: 18px; text-align: center; }
```
